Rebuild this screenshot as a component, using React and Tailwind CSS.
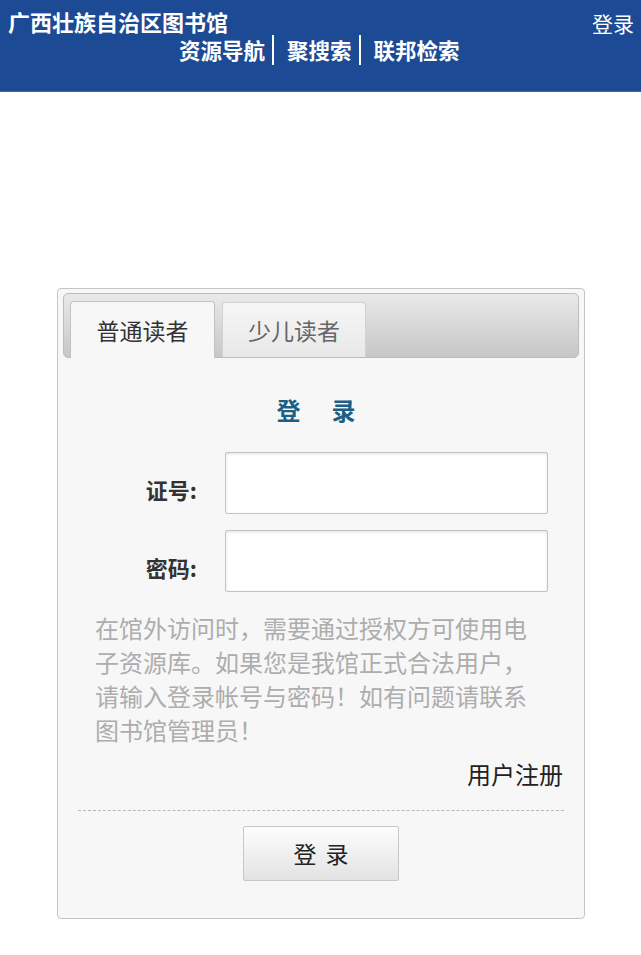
import React from 'react';

const FONT = { fontFamily: '"Noto Sans CJK SC", "Noto Sans", sans-serif' };

export default function App() {
  return (
    <div className="min-h-[955px] bg-white" style={FONT}>
      {/* header bar */}
      <header className="relative h-[92px] bg-[#1c4a94] border-b border-[#3a68ad] text-white">
        <div className="pl-[8px] pt-[6px] text-[22px] font-bold leading-[30px]">广西壮族自治区图书馆</div>
        <a className="absolute right-[7px] top-[8px] text-[21px] leading-[30px]">登录</a>
        <nav className="-mt-[1px] flex items-center pl-[179px] text-[21.5px] font-bold leading-[30px]">
          <span>资源导航</span>
          <span className="ml-[7px] h-[30px] w-[2px] bg-white" />
          <span className="ml-[13px]">聚搜索</span>
          <span className="ml-[7px] h-[30px] w-[2px] bg-white" />
          <span className="ml-[13px]">联邦检索</span>
        </nav>
      </header>

      {/* login card */}
      <div className="ml-[57px] mt-[196px] w-[528px] rounded-[4px] border border-[#c4c4c4] bg-[#f7f7f7] pb-[37px]">
        <div className="mx-[5px] mt-[4px] flex h-[65px] items-end rounded-[5px] border border-[#bcbcbc] bg-gradient-to-b from-[#e9e9e9] to-[#c7c7c7] px-[6px]">
          <div className="-mb-px flex h-[57px] w-[145px] items-center justify-center rounded-t-[4px] border border-b-0 border-[#c2c2c2] bg-[#f7f7f7] text-[23px] text-[#333]">
            普通读者
          </div>
          <div className="ml-[7px] flex h-[55px] w-[144px] items-center justify-center rounded-t-[4px] border border-b-0 border-[#d2d2d2] bg-gradient-to-b from-[#f6f6f6] to-[#e8e8e8] text-[23px] text-[#666]">
            少儿读者
          </div>
        </div>

        <div className="mt-[37px] flex justify-center pr-[10px] text-[24px] font-bold leading-[30px] text-[#1c5f86]">
          <span>登</span>
          <span className="ml-[31px]">录</span>
        </div>

        <div className="mt-[27px] flex items-center">
          <label className="w-[139px] pt-[13px] text-right text-[22px] font-bold text-[#333]">证号:</label>
          <input className="ml-[28px] h-[62px] w-[323px] rounded-[2px] border border-[#c3c3c3] bg-white shadow-[inset_0_1px_3px_rgba(0,0,0,0.12)] outline-none" />
        </div>
        <div className="mt-[16px] flex items-center">
          <label className="w-[139px] pt-[13px] text-right text-[22px] font-bold text-[#333]">密码:</label>
          <input type="password" className="ml-[28px] h-[62px] w-[323px] rounded-[2px] border border-[#c3c3c3] bg-white shadow-[inset_0_1px_3px_rgba(0,0,0,0.12)] outline-none" />
        </div>

        <p className="mt-[19px] ml-[37px] w-[440px] text-[24px] leading-[34px] text-[#adadad]">
          在馆外访问时，需要通过授权方可使用电子资源库。如果您是我馆正式合法用户，请输入登录帐号与密码！如有问题请联系图书馆管理员！
        </p>

        <div className="mt-[10px] pr-[21px] text-right text-[24px] leading-[34px] text-[#222]">用户注册</div>

        <div className="mx-[20px] mt-[19px] border-t border-dashed border-[#b8b8b8]" />

        <div className="mt-[15px] flex justify-center">
          <button className="flex h-[55px] w-[156px] items-center justify-center rounded-[2px] border border-[#c8c8c8] bg-gradient-to-b from-[#fdfdfd] to-[#e3e3e3] text-[23px] text-[#222]">
            <span>登</span>
            <span className="ml-[9px]">录</span>
          </button>
        </div>
      </div>
    </div>
  );
}
